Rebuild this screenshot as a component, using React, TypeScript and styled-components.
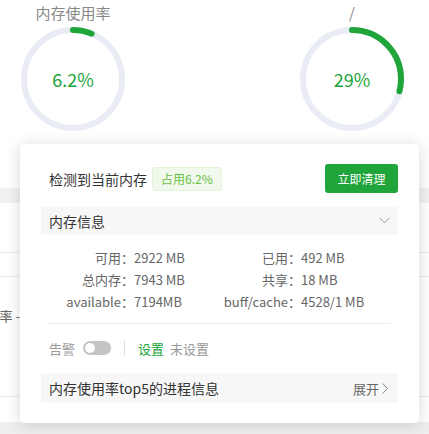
import styled, { createGlobalStyle } from 'styled-components';

const GlobalStyle = createGlobalStyle`
  html, body {
    margin: 0;
    padding: 0;
    background: #fff;
    overflow: hidden;
  }
  body {
    font-family: 'Noto Sans CJK SC', 'Noto Sans', sans-serif;
    color: #333;
  }
`;

const GREEN = '#20a53a';

interface GaugeProps {
  title: string;
  percent: number;
  label: string;
}

const Gauge = ({ title, percent, label }: GaugeProps) => {
  const r = 49;
  const len = 2 * Math.PI * r;
  return (
    <GaugeBox>
      <GaugeTitle>{title}</GaugeTitle>
      <Ring>
        <svg width="104" height="104" viewBox="0 0 104 104">
          <circle cx="52" cy="52" r={r} fill="none" stroke="#e9ecf4" strokeWidth="6" />
          <circle
            cx="52"
            cy="52"
            r={r}
            fill="none"
            stroke={GREEN}
            strokeWidth="6"
            strokeLinecap="round"
            strokeDasharray={`${(len * percent) / 100} ${len}`}
            transform="rotate(-90 52 52)"
          />
        </svg>
        <RingText>{label}</RingText>
      </Ring>
    </GaugeBox>
  );
};

const ChevronDown = () => (
  <svg width="11" height="7" viewBox="0 0 11 7">
    <path d="M0.5 0.8 L5.5 5.8 L10.5 0.8" fill="none" stroke="#999" strokeWidth="1" />
  </svg>
);

const ChevronRight = () => (
  <svg width="6" height="11" viewBox="0 0 6 11">
    <path d="M0.8 0.5 L5.3 5.5 L0.8 10.5" fill="none" stroke="#888" strokeWidth="1" />
  </svg>
);

const infoRows: Array<[string, string, string, string]> = [
  ['可用：', '2922 MB', '已用：', '492 MB'],
  ['总内存：', '7943 MB', '共享：', '18 MB'],
  ['available：', '7194MB', 'buff/cache：', '4528/1 MB'],
];

export default function App() {
  return (
    <Page>
      <GlobalStyle />
      <GaugeRow>
        <Gauge title="内存使用率" percent={6.2} label="6.2%" />
        <Gauge title="/" percent={29} label="29%" />
      </GaugeRow>
      <Table>
        <TableHead />
        <TableRow height={50} />
        <TableRow height={24} />
        <TableRow height={120}>
          <CutCell>内存使用率 -</CutCell>
        </TableRow>
        <TableRow height={25} last />
        <Footer />
      </Table>

      <Popover>
        <HeadRow>
          <HeadLeft>
            检测到当前内存
            <Badge>占用6.2%</Badge>
          </HeadLeft>
          <CleanButton>立即清理</CleanButton>
        </HeadRow>

        <SectionBar>
          <span>内存信息</span>
          <ChevronDown />
        </SectionBar>

        <InfoGrid>
          {infoRows.map((row) => (
            <InfoLine key={row[0]}>
              <InfoLabel>{row[0]}</InfoLabel>
              <InfoValue>{row[1]}</InfoValue>
              <InfoLabel>{row[2]}</InfoLabel>
              <InfoValue>{row[3]}</InfoValue>
            </InfoLine>
          ))}
        </InfoGrid>

        <Divider />

        <AlarmRow>
          <MutedText>告警</MutedText>
          <Toggle />
          <VSep />
          <LinkText>设置</LinkText>
          <MutedText>未设置</MutedText>
        </AlarmRow>

        <SectionBar tall>
          <span>内存使用率top5的进程信息</span>
          <Expand>
            展开
            <ChevronRight />
          </Expand>
        </SectionBar>
      </Popover>
    </Page>
  );
}

const Page = styled.div`
  position: relative;
  width: 429px;
  height: 434px;
  overflow: hidden;
  background: #fff;
`;

const GaugeRow = styled.div`
  display: flex;
  gap: 175px;
  padding-left: 21px;
  height: 188px;
`;

const GaugeBox = styled.div`
  width: 104px;
  display: flex;
  flex-direction: column;
  align-items: center;
`;

const GaugeTitle = styled.div`
  font-size: 15px;
  line-height: 20px;
  margin-top: 3px;
  color: #888;
`;

const Ring = styled.div`
  position: relative;
  width: 104px;
  height: 104px;
  margin-top: 4px;
`;

const RingText = styled.div`
  position: absolute;
  inset: 0;
  display: flex;
  align-items: center;
  justify-content: center;
  font-size: 18px;
  color: ${GREEN};
`;

const Table = styled.div`
  display: flex;
  flex-direction: column;
`;

const TableHead = styled.div`
  height: 15px;
  background: #f2f2f2;
`;

const TableRow = styled.div<{ height: number; last?: boolean }>`
  height: ${(p) => p.height}px;
  border-bottom: 1px solid ${(p) => (p.last ? 'transparent' : '#ececec')};
  box-sizing: border-box;
  display: flex;
  align-items: flex-start;
`;

const CutCell = styled.div`
  width: 20px;
  padding-top: 29px;
  display: flex;
  justify-content: flex-end;
  overflow: hidden;
  white-space: nowrap;
  font-size: 13px;
  color: #666;
`;

const Footer = styled.div`
  height: 40px;
  background: #efefef;
`;

const Popover = styled.div`
  position: absolute;
  left: 20px;
  top: 144px;
  width: 399px;
  height: 279px;
  box-sizing: border-box;
  padding: 20px 21px;
  background: #fff;
  border-radius: 4px;
  box-shadow: 0 2px 16px rgba(0, 0, 0, 0.16);
  display: flex;
  flex-direction: column;
`;

const HeadRow = styled.div`
  display: flex;
  align-items: center;
  justify-content: space-between;
  height: 29px;
  padding-left: 8px;
`;

const HeadLeft = styled.div`
  display: flex;
  align-items: center;
  font-size: 14px;
  color: #333;
`;

const Badge = styled.span`
  margin-left: 5px;
  height: 24px;
  box-sizing: border-box;
  padding: 0 8px;
  display: inline-flex;
  align-items: center;
  font-size: 12px;
  color: #6abf45;
  background: #f0f9eb;
  border: 1px solid #e1f3d8;
  border-radius: 3px;
`;

const CleanButton = styled.button`
  width: 73px;
  height: 29px;
  border: none;
  border-radius: 3px;
  background: ${GREEN};
  color: #fff;
  font-family: inherit;
  font-size: 12px;
  padding: 0;
  cursor: pointer;
`;

const SectionBar = styled.div<{ tall?: boolean }>`
  margin-top: ${(p) => (p.tall ? 13 : 14)}px;
  height: ${(p) => (p.tall ? 30 : 28)}px;
  padding: 0 8px;
  display: flex;
  align-items: center;
  justify-content: space-between;
  background: #f7f7f7;
  font-size: 14px;
  color: #333;
`;

const InfoGrid = styled.div`
  margin-top: 12px;
  display: flex;
  flex-direction: column;
`;

const InfoLine = styled.div`
  display: grid;
  grid-template-columns: 93px 85px 82px 1fr;
  height: 22px;
  align-items: center;
  font-size: 13px;
  color: #666;
`;

const InfoLabel = styled.span`
  text-align: right;
  white-space: nowrap;
`;

const InfoValue = styled.span`
  white-space: nowrap;
`;

const Divider = styled.div`
  margin: 10px 7px 0;
  height: 1px;
  background: #ececec;
`;

const AlarmRow = styled.div`
  margin-top: 13px;
  height: 24px;
  padding-left: 8px;
  display: flex;
  align-items: center;
  font-size: 13px;
`;

const MutedText = styled.span`
  color: #999;
`;

const LinkText = styled.span`
  color: ${GREEN};
  margin-right: 6px;
`;

const Toggle = styled.span`
  position: relative;
  width: 28px;
  height: 14px;
  margin-left: 8px;
  border-radius: 7px;
  background: #c4c4c4;

  &::after {
    content: '';
    position: absolute;
    left: 2px;
    top: 2px;
    width: 10px;
    height: 10px;
    border-radius: 50%;
    background: #fff;
  }
`;

const VSep = styled.span`
  width: 1px;
  height: 16px;
  background: #ddd;
  margin: 0 13px;
`;

const Expand = styled.span`
  display: inline-flex;
  align-items: center;
  gap: 3px;
  font-size: 13px;
  color: #666;
  margin-right: 2px;
`;
